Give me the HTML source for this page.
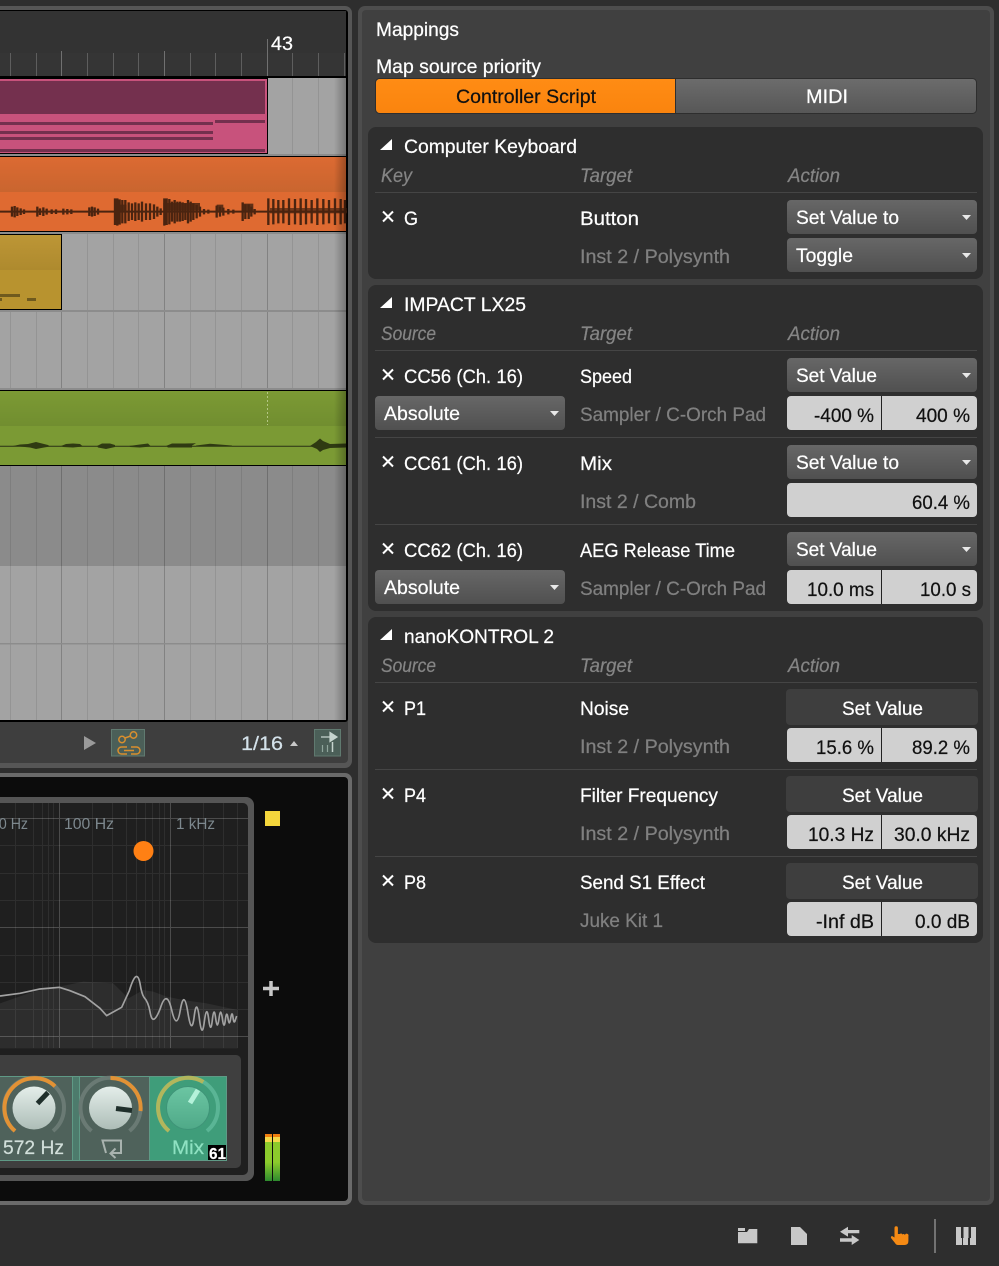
<!DOCTYPE html>
<html><head><meta charset="utf-8"><title>Mappings</title>
<style>
html,body{margin:0;padding:0;background:#2e2e2e;width:999px;height:1266px;overflow:hidden}
svg{display:block}
text{font-family:"Liberation Sans",sans-serif;font-size:19px;fill:#fff;stroke:#fff;stroke-width:.22px;white-space:pre}
.g{fill:#808080;stroke:#808080}.h{fill:#858585;stroke:#858585;font-style:italic}.d{fill:#111;stroke:#111}
.nostroke{stroke:none}
</style></head><body>
<svg xmlns="http://www.w3.org/2000/svg" width="999" height="1266" viewBox="0 0 999 1266">
<defs>
<linearGradient id="dd" x1="0" y1="0" x2="0" y2="1"><stop offset="0" stop-color="#676767"/><stop offset="1" stop-color="#505050"/></linearGradient>
<linearGradient id="mg" x1="0" y1="0" x2="0" y2="1"><stop offset="0" stop-color="#6c6c6c"/><stop offset="1" stop-color="#575757"/></linearGradient>
<linearGradient id="og" x1="0" y1="0" x2="0" y2="1"><stop offset="0" stop-color="#ff8c14"/><stop offset="1" stop-color="#fa840e"/></linearGradient>
<linearGradient id="or" x1="0" y1="0" x2="0" y2="1"><stop offset="0" stop-color="#dc6a32"/><stop offset="1" stop-color="#c9652f"/></linearGradient>
<linearGradient id="ye" x1="0" y1="0" x2="0" y2="1"><stop offset="0" stop-color="#bd9636"/><stop offset="1" stop-color="#ae8a2e"/></linearGradient>
<linearGradient id="gr" x1="0" y1="0" x2="0" y2="1"><stop offset="0" stop-color="#7c9a34"/><stop offset="1" stop-color="#718e30"/></linearGradient>
<linearGradient id="sh" x1="0" y1="0" x2="1" y2="0"><stop offset="0" stop-color="#000" stop-opacity="0"/><stop offset="1" stop-color="#000" stop-opacity=".28"/></linearGradient>
<linearGradient id="kn" x1="0" y1="0" x2="0" y2="1"><stop offset="0" stop-color="#e4eeea"/><stop offset="1" stop-color="#adbdb7"/></linearGradient>
<linearGradient id="kg" x1="0" y1="0" x2="0" y2="1"><stop offset="0" stop-color="#6cc6a3"/><stop offset="1" stop-color="#4fa988"/></linearGradient>
<linearGradient id="mt" x1="0" y1="0" x2="0" y2="1"><stop offset="0" stop-color="#8ccb2c"/><stop offset=".6" stop-color="#8ccb2c"/><stop offset="1" stop-color="#2e8a2e"/></linearGradient>
</defs>

<rect width="999" height="1266" fill="#2e2e2e"/>

<!-- arranger panel -->
<rect x="-10" y="6" width="362" height="762" rx="7" fill="#565656"/>
<rect x="-10" y="10" width="358" height="753" rx="4" fill="#3e3e3e"/>
<rect x="-10" y="10" width="358" height="712" rx="3" fill="#000"/>
<rect x="-10" y="11" width="356" height="65" fill="#333"/>
<rect x="-10" y="53" width="356" height="23" fill="#353535"/>
<path d="M10.500 53V76M36.500 53V76M87.500 53V76M113.500 53V76M138.500 53V76M190.500 53V76M215.500 53V76M241.500 53V76M292.500 53V76M318.500 53V76M344.500 53V76" stroke="#5e5e5e" stroke-width="1"/>
<path d="M61.500 51V76M164.500 51V76M267.500 39V76" stroke="#707070" stroke-width="1"/>
<text x="271" y="50" textLength="22" lengthAdjust="spacingAndGlyphs">43</text>

<rect x="0" y="78" width="346" height="642" fill="#a3a3a3"/>
<rect x="0" y="466" width="346" height="100" fill="#8b8b8b"/>
<path d="M10.500 78V720M36.500 78V720M87.500 78V720M113.500 78V720M138.500 78V720M190.500 78V720M215.500 78V720M241.500 78V720M292.500 78V720M318.500 78V720" stroke="#000" stroke-opacity=".09" stroke-width="1"/>
<path d="M61.500 78V720M164.500 78V720M267.500 78V720" stroke="#000" stroke-opacity=".2" stroke-width="1"/>
<rect x="0" y="154" width="346" height="2" fill="#8c8c8c"/>
<rect x="0" y="232" width="346" height="2" fill="#8c8c8c"/>
<rect x="0" y="310" width="346" height="2" fill="#8c8c8c"/>
<rect x="0" y="388" width="346" height="2" fill="#8c8c8c"/>
<rect x="0" y="643" width="346" height="1.500" fill="#8c8c8c"/>

<!-- pink clip -->
<rect x="-2" y="78" width="270" height="76" fill="#000"/>
<rect x="-2" y="79" width="269" height="74" fill="#c8527c"/>
<rect x="-2" y="81" width="267" height="33" fill="#74304e"/>
<path d="M0 123.500H213M0 132.500H213M0 138.500H213M215 121.500H265M0 150.500H265" stroke="#74304e" stroke-width="3"/>

<!-- orange clip -->
<rect x="0" y="156" width="346" height="76" fill="#000"/>
<rect x="0" y="157" width="346" height="35" fill="url(#or)"/>
<rect x="0" y="192" width="346" height="39" fill="#df6a31"/>
<g transform="scale(.33333)" stroke="#4a2410" stroke-width="7" fill="none">
<path d="M0 635H1040" stroke-width="6"/>
<path d="M36 620v30M44 618v34M52 622v26M62 625v20M72 628v14M112 620v30M120 625v20M130 622v26M140 626v18M155 628v14M168 628v14M190 626v18M202 627v16M214 628v14M268 622v26M276 620v30M284 622v26M294 626v18M345 595v80M352 595v82M359 598v76M367 600v70M376 600v70M386 607v56M396 610v50M406 607v56M416 610v50M426 605v60M438 610v50M450 610v50M462 613v44M472 620v30M482 625v20M493 595v82M500 595v80M508 597v76M516 605v60M524 600v70M532 605v60M540 605v60M548 607v56M556 610v50M564 600v70M572 605v60M580 610v50M590 615v40M600 620v30M612 627v16M625 629v12M650 617v36M660 620v30M670 623v24M685 627v16M700 629v12M728 607v56M736 613v44M746 613v44M754 620v30M764 627v16M805 595v80M820 597v76M835 600v70M850 600v70M867 595v80M885 597v76M902 595v80M918 597v76M935 600v70M952 595v80M970 597v76M987 600v70M1005 595v80M1022 597v76M1035 600v70"/>
<path d="M490 620H600M350 625H380M650 625H670M730 622H760" stroke-width="22" stroke-opacity=".85"/>
<path d="M810 632H1040" stroke-width="16" stroke-opacity=".7"/>
</g>

<!-- yellow clip -->
<rect x="-2" y="234" width="64" height="76" fill="#000"/>
<rect x="-2" y="235" width="63" height="35" fill="url(#ye)"/>
<rect x="-2" y="270" width="63" height="39" fill="#b8932f"/>
<path d="M0 295.500H20M0 299.500H2M27 299.500H36" stroke="#6f5a1e" stroke-width="3"/>

<!-- green clip -->
<rect x="0" y="390" width="346" height="76" fill="#000"/>
<rect x="0" y="391" width="346" height="35" fill="url(#gr)"/>
<rect x="0" y="426" width="346" height="39" fill="#7b9a34"/>
<path d="M267.500 392V425" stroke="#b4c684" stroke-width="1" stroke-dasharray="2 2"/>
<path d="M0 446.300H346" stroke="#2a3014" stroke-width="1"/>
<path fill="#2f3a12" d="M13 446L20 444.500L28 444L36 442L42 443.500L48 445L50 446.500L44 447.500L36 449L30 447.500L20 446.500ZM61 446L66 444L73 443.500L80 444L83 446.500L73 447.500L63 447ZM97 446L102 443.500L110 443.500L115 445L115 447L106 449L98 447.500ZM129 446L140 444.500L148 443.500L151 446.500L140 447.500L130 447ZM166 446L172 443.500L185 443.500L196 443.200L192 445.500L192 447.500L168 447.500ZM196 445.500L210 443.800L232 445.500L232 446.500L196 446.500ZM310 446L316 442L320 438.500L323 441L330 444L346 443.500V447.500L330 448L323 450L320 452L317 449Z"/>
<rect x="334" y="78" width="12" height="642" fill="url(#sh)"/>

<!-- toolbar -->
<path d="M84 736L96 743L84 750Z" fill="#9a9a9a"/>
<rect x="111.500" y="729.500" width="33" height="26.500" fill="#4b5f58" stroke="#607a70"/>
<g fill="none" stroke="#d98f2e" stroke-width="1.500">
<circle cx="122" cy="739.500" r="3.200"/><circle cx="133.500" cy="735" r="3.200"/><path d="M125 738L130.500 736"/>
<path d="M127 747h-5.500a3.500 3.500 0 0 0 0 7h5.500M131 747h5.500a3.500 3.500 0 0 1 0 7h-5.500M124 750.500h10"/>
</g>
<text x="241" y="750" textLength="42" lengthAdjust="spacingAndGlyphs" style="fill:#d4e2ea;stroke:#d4e2ea">1/16</text>
<path d="M290 746L294 741L298 746Z" fill="#c8c8c8"/>
<rect x="314.500" y="729.500" width="26" height="26.500" fill="#4b5f58" stroke="#607a70"/>
<path d="M321 737H331M330 732.500L337 737L330 741.500Z" fill="#c6d4ce" stroke="#c6d4ce" stroke-width="1.200"/>
<path d="M322.500 745V752M327.500 745V752" stroke="#8fa59c" stroke-width="1.200"/><path d="M332.500 742V752" stroke="#c6d4ce" stroke-width="1.500"/>

<!-- device panel -->
<rect x="-10" y="773" width="362" height="432" rx="7" fill="#6a6a6a"/>
<rect x="-10" y="777" width="358" height="424" rx="4" fill="#0c0c0c"/>
<rect x="-10" y="797" width="264" height="384" rx="8" fill="#555"/>
<rect x="-10" y="803" width="258" height="372" rx="5" fill="#1f1f1f"/>
<g transform="translate(0,770) scale(.33333)">
<path d="M0 700L100 665L178 650L250 635L340 640L385 685L430 660L460 665L500 680L550 690L620 700L713 720V835H0Z" fill="#2d2d2d"/>
</g>
<path d="M0 845.500H248M0 873.500H248M0 900.500H248M0 955.500H248M0 982.500H248M0 1009.500H248M15.500 803V1048M33.500 803V1048M42.500 803V1048M48.500 803V1048M53.500 803V1048M92.500 803V1048M112.500 803V1048M126.500 803V1048M136.500 803V1048M145.500 803V1048M152.500 803V1048M159.500 803V1048M164.500 803V1048M203.500 803V1048M223.500 803V1048M237.500 803V1048" stroke="#fff" stroke-opacity=".07" stroke-width="1" fill="none"/>
<path d="M0 818.500H248M0 927.500H248M0 1036.500H248M59.500 803V1048M170.500 803V1048" stroke="#fff" stroke-opacity=".2" stroke-width="1" fill="none"/>
<g transform="translate(0,770) scale(.33333)">
<path d="M0 678L60 670L120 657L178 652L210 662L255 680L300 715L320 737L365 712L388 662Q410 590 420 640Q425 672 432 682Q445 696 450 725Q458 775 481 715Q500 655 515 720Q530 785 541 720Q552 655 563.500 727Q575 800 582.500 740Q590 680 598 745Q606 810 613 755Q620 700 626 747Q632 795 637 750Q642 705 647 745Q652 785 657 746Q662 707 667 745Q672 783 676 750Q680 718 684 745Q688 772 692 746Q696 720 699 742Q702 765 706 750L710 738" fill="none" stroke="#a2a2a2" stroke-width="5" stroke-linejoin="round"/>
</g>
<text class="nostroke" x="-9" y="829" textLength="37" lengthAdjust="spacingAndGlyphs" style="fill:#7d888e;font-size:16px">10 Hz</text>
<text class="nostroke" x="64" y="829" textLength="50" lengthAdjust="spacingAndGlyphs" style="fill:#7d888e;font-size:16px">100 Hz</text>
<text class="nostroke" x="176" y="829" textLength="39" lengthAdjust="spacingAndGlyphs" style="fill:#7d888e;font-size:16px">1 kHz</text>
<circle cx="143.500" cy="851" r="10" fill="#ff8014"/>
<rect x="-10" y="1055" width="251" height="113" rx="5" fill="#3f3f3f"/>

<!-- knobs -->
<rect x="-2" y="1076" width="75" height="85" fill="#4f625b"/>
<rect x="73" y="1076" width="7" height="85" fill="#4d7b6c"/>
<rect x="80" y="1076" width="69" height="85" fill="#4f625b"/>
<rect x="149" y="1076" width="78" height="85" fill="#3f9d7a"/>
<path d="M0 1076.500H227M0 1160.500H227M72.500 1076V1161M79.500 1076V1161M149.500 1076V1161M226.500 1076V1161" stroke="#5f9a86" stroke-width="1" fill="none"/>
<g fill="none" stroke-width="4">
<path d="M15 1131A30 30 0 1 1 53 1131" stroke="#6a7a74"/>
<path d="M15 1131A30 30 0 1 1 55 1086.300" stroke="#e29235"/>
<path d="M91.500 1131A30 30 0 1 1 129.500 1131" stroke="#6a7a74"/>
<path d="M110.500 1078A30 30 0 0 1 140.500 1111" stroke="#e29235"/>
<path d="M169 1131A30 30 0 1 1 207 1131" stroke="#5ab595"/>
<path d="M169 1131A30 30 0 0 1 203.300 1082" stroke="#b2b65c"/>
</g>
<circle cx="34" cy="1108" r="21.500" fill="url(#kn)"/>
<circle cx="110.500" cy="1108" r="21.500" fill="url(#kn)"/>
<circle cx="188" cy="1108" r="21.500" fill="url(#kg)" stroke="#3f9478"/>
<path d="M37.500 1103.500L48 1092.500M116 1108.500L132 1110.500" stroke="#1f2f2b" stroke-width="5"/>
<path d="M190 1103L198 1090" stroke="#b4f2da" stroke-width="5"/>
<text x="3" y="1154" textLength="61" lengthAdjust="spacingAndGlyphs" style="fill:#d2dfda;stroke:#d2dfda">572 Hz</text>
<path d="M106 1153L102.500 1140.500H121V1153H111M115.500 1148.500L110.500 1153.500L115.500 1158" fill="none" stroke="#a9b3af" stroke-width="2"/>
<text x="172" y="1154" textLength="32" lengthAdjust="spacingAndGlyphs" style="fill:#8fe2c2;stroke:#8fe2c2">Mix</text>
<rect x="208" y="1145" width="18" height="15" fill="#000"/>
<text x="209" y="1159" textLength="17" lengthAdjust="spacingAndGlyphs" style="font-size:16px;font-weight:bold">61</text>

<rect x="265" y="811" width="15" height="15" fill="#f4d63c"/>
<path d="M263 988.500H279M271 981V996" stroke="#c8c8c8" stroke-width="3.500"/>
<rect x="265" y="1134" width="7" height="47" fill="url(#mt)"/><rect x="273" y="1134" width="7" height="47" fill="url(#mt)"/>
<path d="M265 1134h7v3h-7zM273 1134h7v3h-7z" fill="#f07f10"/>
<path d="M265 1137h7v5h-7zM273 1137h7v5h-7z" fill="#f5d84a"/>

<!-- right panel -->
<rect x="358" y="6" width="636" height="1199" rx="7" fill="#4d4d4d"/>
<rect x="362" y="10" width="628" height="1191" rx="4" fill="#404040"/>
<text x="376" y="36" textLength="83" lengthAdjust="spacingAndGlyphs">Mappings</text>
<text x="376" y="73" textLength="165" lengthAdjust="spacingAndGlyphs">Map source priority</text>

<rect x="375.500" y="78.500" width="601" height="35" rx="4" fill="url(#mg)" stroke="#2e2e2e"/>
<path d="M380 79H675V113H380a4 4 0 0 1-4-4V83a4 4 0 0 1 4-4Z" fill="url(#og)"/>
<path d="M675.500 79V113" stroke="#2e2e2e"/>
<text x="456" y="103" textLength="140" lengthAdjust="spacingAndGlyphs" class="d">Controller Script</text>
<text x="806" y="103" textLength="42" lengthAdjust="spacingAndGlyphs">MIDI</text>

<!-- sections -->
<rect x="368" y="127" width="615" height="152" rx="8" fill="#2e2e2e"/>
<rect x="368" y="285" width="615" height="326" rx="8" fill="#2e2e2e"/>
<rect x="368" y="617" width="615" height="326" rx="8" fill="#2e2e2e"/>
<path d="M380 150H392V139ZM380 308H392V297ZM380 640H392V629Z" fill="#fff"/>
<path d="M375 192.500H977M375 350.500H977M375 437.500H977M375 524.500H977M375 682.500H977M375 769.500H977M375 856.500H977" stroke="#454545"/>
<path d="M383 211.500L393 221.500M393 211.500L383 221.500M383 369.500L393 379.500M393 369.500L383 379.500M383 456.500L393 466.500M393 456.500L383 466.500M383 543.500L393 553.500M393 543.500L383 553.500M383 701.500L393 711.500M393 701.500L383 711.500M383 788.500L393 798.500M393 788.500L383 798.500M383 875.500L393 885.500M393 875.500L383 885.500" stroke="#fff" stroke-width="2"/>

<text x="404" y="153" textLength="173" lengthAdjust="spacingAndGlyphs">Computer Keyboard</text>
<text x="381" y="182" textLength="31" lengthAdjust="spacingAndGlyphs" class="h">Key</text>
<text x="580" y="182" textLength="52" lengthAdjust="spacingAndGlyphs" class="h">Target</text>
<text x="788" y="182" textLength="52" lengthAdjust="spacingAndGlyphs" class="h">Action</text>
<text x="404" y="225" textLength="14" lengthAdjust="spacingAndGlyphs">G</text>
<text x="580" y="225" textLength="59" lengthAdjust="spacingAndGlyphs">Button</text>
<text x="580" y="263" textLength="150" lengthAdjust="spacingAndGlyphs" class="g">Inst 2 / Polysynth</text>
<rect x="787" y="200" width="190" height="34" rx="4" fill="url(#dd)"/>
<rect x="787" y="238" width="190" height="34" rx="4" fill="url(#dd)"/>
<text x="796" y="224" textLength="103" lengthAdjust="spacingAndGlyphs">Set Value to</text>
<text x="796" y="262" textLength="57" lengthAdjust="spacingAndGlyphs">Toggle</text>

<text x="404" y="311" textLength="122" lengthAdjust="spacingAndGlyphs">IMPACT LX25</text>
<text x="381" y="340" textLength="55" lengthAdjust="spacingAndGlyphs" class="h">Source</text>
<text x="580" y="340" textLength="52" lengthAdjust="spacingAndGlyphs" class="h">Target</text>
<text x="788" y="340" textLength="52" lengthAdjust="spacingAndGlyphs" class="h">Action</text>

<text x="404" y="383" textLength="119" lengthAdjust="spacingAndGlyphs">CC56 (Ch. 16)</text>
<text x="580" y="383" textLength="52" lengthAdjust="spacingAndGlyphs">Speed</text>
<text x="580" y="421" textLength="186" lengthAdjust="spacingAndGlyphs" class="g">Sampler / C-Orch Pad</text>
<rect x="787" y="358" width="190" height="34" rx="4" fill="url(#dd)"/>
<text x="796" y="382" textLength="81" lengthAdjust="spacingAndGlyphs">Set Value</text>
<rect x="375" y="396" width="190" height="34" rx="4" fill="url(#dd)"/>
<text x="384" y="420" textLength="76" lengthAdjust="spacingAndGlyphs">Absolute</text>
<rect x="787" y="396" width="190" height="34" rx="4" fill="#d0d0d0"/><path d="M881.500 396V430" stroke="#222"/>
<text x="814" y="422" textLength="60" lengthAdjust="spacingAndGlyphs" class="d">-400 %</text>
<text x="916" y="422" textLength="54" lengthAdjust="spacingAndGlyphs" class="d">400 %</text>

<text x="404" y="470" textLength="119" lengthAdjust="spacingAndGlyphs">CC61 (Ch. 16)</text>
<text x="580" y="470" textLength="32" lengthAdjust="spacingAndGlyphs">Mix</text>
<text x="580" y="508" textLength="116" lengthAdjust="spacingAndGlyphs" class="g">Inst 2 / Comb</text>
<rect x="787" y="445" width="190" height="34" rx="4" fill="url(#dd)"/>
<text x="796" y="469" textLength="103" lengthAdjust="spacingAndGlyphs">Set Value to</text>
<rect x="787" y="483" width="190" height="34" rx="4" fill="#d0d0d0"/>
<text x="912" y="509" textLength="58" lengthAdjust="spacingAndGlyphs" class="d">60.4 %</text>

<text x="404" y="557" textLength="119" lengthAdjust="spacingAndGlyphs">CC62 (Ch. 16)</text>
<text x="580" y="557" textLength="155" lengthAdjust="spacingAndGlyphs">AEG Release Time</text>
<text x="580" y="595" textLength="186" lengthAdjust="spacingAndGlyphs" class="g">Sampler / C-Orch Pad</text>
<rect x="787" y="532" width="190" height="34" rx="4" fill="url(#dd)"/>
<text x="796" y="556" textLength="81" lengthAdjust="spacingAndGlyphs">Set Value</text>
<rect x="375" y="570" width="190" height="34" rx="4" fill="url(#dd)"/>
<text x="384" y="594" textLength="76" lengthAdjust="spacingAndGlyphs">Absolute</text>
<rect x="787" y="570" width="190" height="34" rx="4" fill="#d0d0d0"/><path d="M881.500 570V604" stroke="#222"/>
<text x="807" y="596" textLength="67" lengthAdjust="spacingAndGlyphs" class="d">10.0 ms</text>
<text x="920" y="596" textLength="51" lengthAdjust="spacingAndGlyphs" class="d">10.0 s</text>

<path d="M962 215H971L966.500 220ZM962 253H971L966.500 258ZM962 373H971L966.500 378ZM550 411H559L554.500 416ZM962 460H971L966.500 465ZM962 547H971L966.500 552ZM550 585H559L554.500 590Z" fill="#e8e8e8"/>

<text x="404" y="643" textLength="150" lengthAdjust="spacingAndGlyphs">nanoKONTROL 2</text>
<text x="381" y="672" textLength="55" lengthAdjust="spacingAndGlyphs" class="h">Source</text>
<text x="580" y="672" textLength="52" lengthAdjust="spacingAndGlyphs" class="h">Target</text>
<text x="788" y="672" textLength="52" lengthAdjust="spacingAndGlyphs" class="h">Action</text>

<text x="404" y="715" textLength="22" lengthAdjust="spacingAndGlyphs">P1</text>
<text x="580" y="715" textLength="49" lengthAdjust="spacingAndGlyphs">Noise</text>
<text x="580" y="753" textLength="150" lengthAdjust="spacingAndGlyphs" class="g">Inst 2 / Polysynth</text>
<rect x="786" y="689" width="192" height="36" rx="4" fill="#3e3e3e"/>
<text x="842" y="715" textLength="81" lengthAdjust="spacingAndGlyphs">Set Value</text>
<rect x="787" y="728" width="190" height="34" rx="4" fill="#d0d0d0"/><path d="M881.500 728V762" stroke="#222"/>
<text x="816" y="754" textLength="58" lengthAdjust="spacingAndGlyphs" class="d">15.6 %</text>
<text x="912" y="754" textLength="58" lengthAdjust="spacingAndGlyphs" class="d">89.2 %</text>

<text x="404" y="802" textLength="22" lengthAdjust="spacingAndGlyphs">P4</text>
<text x="580" y="802" textLength="138" lengthAdjust="spacingAndGlyphs">Filter Frequency</text>
<text x="580" y="840" textLength="150" lengthAdjust="spacingAndGlyphs" class="g">Inst 2 / Polysynth</text>
<rect x="786" y="776" width="192" height="36" rx="4" fill="#3e3e3e"/>
<text x="842" y="802" textLength="81" lengthAdjust="spacingAndGlyphs">Set Value</text>
<rect x="787" y="815" width="190" height="34" rx="4" fill="#d0d0d0"/><path d="M881.500 815V849" stroke="#222"/>
<text x="808" y="841" textLength="66" lengthAdjust="spacingAndGlyphs" class="d">10.3 Hz</text>
<text x="894" y="841" textLength="76" lengthAdjust="spacingAndGlyphs" class="d">30.0 kHz</text>

<text x="404" y="889" textLength="22" lengthAdjust="spacingAndGlyphs">P8</text>
<text x="580" y="889" textLength="125" lengthAdjust="spacingAndGlyphs">Send S1 Effect</text>
<text x="580" y="927" textLength="83" lengthAdjust="spacingAndGlyphs" class="g">Juke Kit 1</text>
<rect x="786" y="863" width="192" height="36" rx="4" fill="#3e3e3e"/>
<text x="842" y="889" textLength="81" lengthAdjust="spacingAndGlyphs">Set Value</text>
<rect x="787" y="902" width="190" height="34" rx="4" fill="#d0d0d0"/><path d="M881.500 902V936" stroke="#222"/>
<text x="816" y="928" textLength="58" lengthAdjust="spacingAndGlyphs" class="d">-Inf dB</text>
<text x="915" y="928" textLength="55" lengthAdjust="spacingAndGlyphs" class="d">0.0 dB</text>

<!-- bottom icons -->
<g fill="#c8c8c8">
<path d="M738 1228h7v3h-7zM738 1232h9l2-3h8.300v14.300H738Z"/>
<path d="M791 1227h9l7 7v11H791Z"/>
<path d="M840 1231.700L848 1226.700V1230H859.300V1233.300H848V1236.700ZM859.300 1240L851.700 1235V1238.300H840V1241.700H851.700V1245Z"/>
<path d="M956 1227h5v11h1v7h-6zM963.500 1227h5v11h-.5v7h-5v-7h.5zM971 1227h5v18h-6v-7h1z"/>
</g>
<path d="M894.500 1228a1.700 1.700 0 0 1 3.400 0V1234h2a1.500 1.500 0 0 1 2.500.500a1.500 1.500 0 0 1 2.500.500a1.500 1.500 0 0 1 3.500 1V1241q0 4-4 4H898q-2 0-3-2L891 1238q-.500-1.500 1-2l2.500 1.500Z" fill="#f58a14"/>
<path d="M935 1219V1253" stroke="#888" stroke-width="1.500"/>
</svg>
</body></html>
